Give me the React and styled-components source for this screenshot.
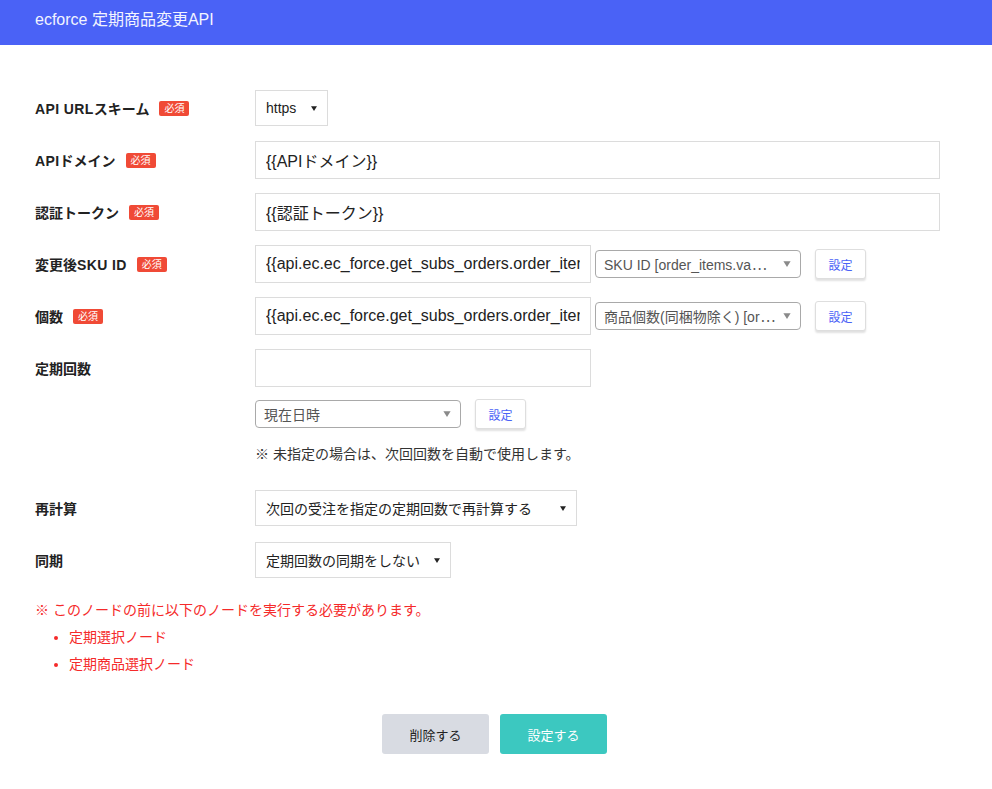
import React from "react";
import styled, { createGlobalStyle } from "styled-components";

const Global = createGlobalStyle`
  * { box-sizing: border-box; }
  body {
    margin: 0;
    background: #fff;
    font-family: "Liberation Sans", "Noto Sans CJK JP", sans-serif;
    color: #222;
  }
`;

const Header = styled.header`
  height: 45px;
  background: #4a62f6;
  color: #f2f4ff;
  font-size: 16px;
  padding: 10px 0 0 35px;
  line-height: 20px;
`;

const Main = styled.main`
  padding: 44px 52px 0 35px;
  display: flex;
  flex-direction: column;
`;

const Row = styled.div`
  display: grid;
  grid-template-columns: 220px 1fr;
  align-items: start;
  margin-top: ${(p) => p.$top ?? 14}px;
  &:first-child { margin-top: 0; }
`;

const Label = styled.div`
  height: 38px;
  display: flex;
  align-items: center;
  gap: 10px;
  font-size: 14px;
  font-weight: bold;
  color: #222;
`;

const Latin = styled.span`
  letter-spacing: 0.4px;
`;

const Badge = styled.span`
  background: #f04a36;
  color: #fff;
  font-size: 10px;
  font-weight: normal;
  line-height: 15px;
  padding: 0 5px;
  border-radius: 2px;
`;

const Field = styled.div`
  display: flex;
  flex-direction: column;
  gap: 12px;
`;

const Line = styled.div`
  display: flex;
  align-items: center;
  height: ${(p) => p.$h ?? 38}px;
  gap: ${(p) => p.$gap ?? 4}px;
`;

const TextInput = styled.input`
  width: ${(p) => (p.$w ? `${p.$w}px` : "100%")};
  height: 38px;
  margin: 0;
  border: 1px solid #dcdcdc;
  border-radius: 0;
  padding: 0 10px;
  font-family: inherit;
  font-size: 16px;
  color: #222;
  background: #fff;
  outline: none;
  flex-shrink: 0;
`;

const PlainSelect = styled.div`
  width: ${(p) => p.$w}px;
  height: 36px;
  border: 1px solid #dcdcdc;
  padding: 0 10px;
  display: flex;
  align-items: center;
  justify-content: space-between;
  font-size: 14px;
  color: #222;
  white-space: nowrap;
`;

const RoundSelect = styled.div`
  width: 206px;
  height: 28px;
  border: 1px solid #a9a9a9;
  border-radius: 4px;
  padding: 0 9px 0 8px;
  display: flex;
  align-items: center;
  justify-content: space-between;
  font-size: 14px;
  color: #555;
  white-space: nowrap;
  overflow: hidden;
  flex-shrink: 0;
`;

const Dots = styled.span`
  font-family: "Noto Sans CJK JP", sans-serif;
  margin-left: 1px;
`;

const SetButton = styled.button`
  width: 51px;
  height: 30px;
  margin-left: ${(p) => p.$ml ?? 10}px;
  border: 1px solid #dedede;
  border-radius: 3px;
  background: #fff;
  box-shadow: 0 2px 2px rgba(0, 0, 0, 0.12);
  color: #4a62f6;
  font-family: inherit;
  font-size: 12px;
  padding: 0;
  flex-shrink: 0;
`;

const Note = styled.p`
  margin: 3px 0 0;
  font-size: 14px;
  line-height: 20px;
  color: #333;
`;

const Warning = styled.div`
  margin-top: 21px;
  color: #f52a2a;
  font-size: 14px;
  line-height: 20px;
`;

const List = styled.ul`
  margin: 7px 0 0;
  padding-left: 34px;
  li { margin-top: 7px; }
  li:first-child { margin-top: 0; }
`;

const Footer = styled.div`
  display: flex;
  justify-content: center;
  gap: 11px;
  margin-top: 40px;
  padding-right: 3px;
`;

const ActionButton = styled.button`
  width: 107px;
  height: 40px;
  border: none;
  border-radius: 3px;
  font-family: inherit;
  font-size: 13px;
  background: ${(p) => (p.$primary ? "#3cc8c0" : "#d8dbe2")};
  color: ${(p) => (p.$primary ? "#fff" : "#222")};
`;

const Caret = ({ color = "#222", w = 6, h = 5 }) => (
  <svg width={w} height={h} viewBox="0 0 6 5">
    <path d="M0 0.3h6L3 5z" fill={color} />
  </svg>
);

const Required = () => <Badge>必須</Badge>;

export default function App() {
  return (
    <>
      <Global />
      <Header>ecforce 定期商品変更API</Header>
      <Main>
        <Row>
          <Label>
            <span>
              <Latin>API URL</Latin>スキーム
            </span>
            <Required />
          </Label>
          <Line>
            <PlainSelect $w={73}>
              https <Caret />
            </PlainSelect>
          </Line>
        </Row>
        <Row>
          <Label>
            <span>
              <Latin>API</Latin>ドメイン
            </span>
            <Required />
          </Label>
          <TextInput readOnly value="{{APIドメイン}}" />
        </Row>
        <Row>
          <Label>
            <span>認証トークン</span>
            <Required />
          </Label>
          <TextInput readOnly value="{{認証トークン}}" />
        </Row>
        <Row>
          <Label>
            <span>
              変更後<Latin>SKU ID</Latin>
            </span>
            <Required />
          </Label>
          <Line>
            <TextInput $w={336} readOnly value="{{api.ec.ec_force.get_subs_orders.order_items.variant.sku}}" />
            <RoundSelect>
              <span>
                SKU ID [order_items.va<Dots>⋯</Dots>
              </span>
              <Caret color="#8a8a8a" w={8} h={6} />
            </RoundSelect>
            <SetButton $ml={10}>設定</SetButton>
          </Line>
        </Row>
        <Row>
          <Label>
            <span>個数</span>
            <Required />
          </Label>
          <Line>
            <TextInput $w={336} readOnly value="{{api.ec.ec_force.get_subs_orders.order_items.quantity}}" />
            <RoundSelect>
              <span>
                商品個数(同梱物除く) [or<Dots>⋯</Dots>
              </span>
              <Caret color="#8a8a8a" w={8} h={6} />
            </RoundSelect>
            <SetButton $ml={10}>設定</SetButton>
          </Line>
        </Row>
        <Row>
          <Label>定期回数</Label>
          <Field>
            <TextInput $w={336} readOnly value="" />
            <Line $h={30} $gap={0}>
              <RoundSelect>
                現在日時 <Caret color="#8a8a8a" w={8} h={6} />
              </RoundSelect>
              <SetButton $ml={14}>設定</SetButton>
            </Line>
            <Note>※ 未指定の場合は、次回回数を自動で使用します。</Note>
          </Field>
        </Row>
        <Row $top={25}>
          <Label>再計算</Label>
          <Line>
            <PlainSelect $w={322}>
              次回の受注を指定の定期回数で再計算する <Caret />
            </PlainSelect>
          </Line>
        </Row>
        <Row>
          <Label>同期</Label>
          <Line>
            <PlainSelect $w={196}>
              定期回数の同期をしない <Caret />
            </PlainSelect>
          </Line>
        </Row>
        <Warning>
          ※ このノードの前に以下のノードを実行する必要があります。
          <List>
            <li>定期選択ノード</li>
            <li>定期商品選択ノード</li>
          </List>
        </Warning>
      </Main>
      <Footer>
        <ActionButton>削除する</ActionButton>
        <ActionButton $primary>設定する</ActionButton>
      </Footer>
    </>
  );
}
